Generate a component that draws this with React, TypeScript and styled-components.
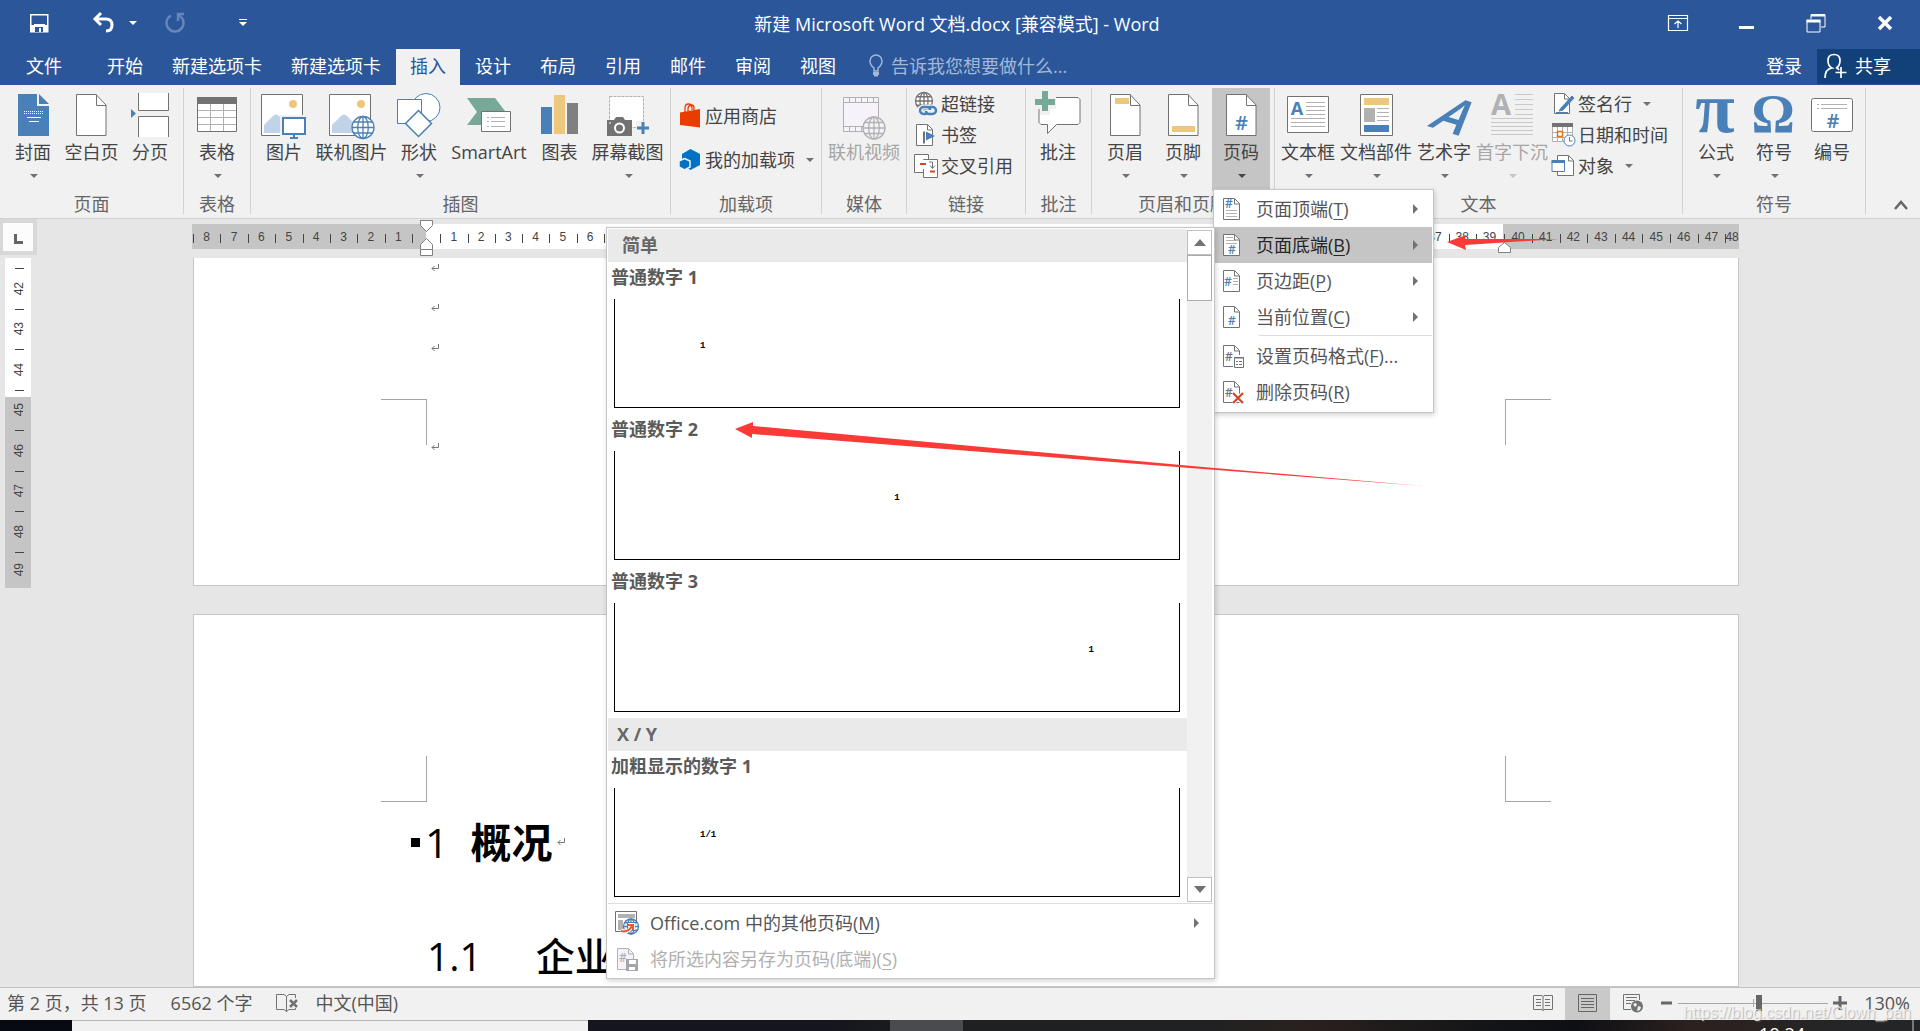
import React from "react";
import styled, { createGlobalStyle, css } from "styled-components";

const Global = createGlobalStyle`
  *, *::before, *::after { box-sizing: border-box; }
  body {
    margin: 0;
    background: #e6e6e6;
    color: #444;
    font-family: "Open Sans", "Noto Sans CJK SC", sans-serif;
    font-size: 18px;
    line-height: 24px;
  }
  button, input {
    font: inherit;
    color: inherit;
    border: 0;
    padding: 0;
    margin: 0;
    background: transparent;
  }
  button { white-space: nowrap; }
  svg { display: block; flex: none; }
`;

const BLUE = "#4a80b8";
const GREY = "#727272";
const LINE = "#b1b1b1";

/* ---------- window frame ---------- */

const Window = styled.div`
  position: relative;
  display: flex;
  flex-direction: column;
  height: 100vh;
  min-height: 600px;
  overflow: hidden;
`;

const TitleBar = styled.header`
  display: grid;
  grid-template-columns: 1fr auto 1fr;
  align-items: center;
  height: 49px;
  padding-right: 6px;
  background: #2b579a;
  color: #fff;
`;

const Title = styled.h1`
  margin: 0;
  padding-bottom: 2px;
  font-size: 18px;
  font-weight: 400;
  line-height: 24px;
`;

const QuickAccess = styled.div`
  display: flex;
  align-items: center;
  padding: 0 0 3px 28px;
`;

const QuickButton = styled.button<{ $space?: number }>`
  display: flex;
  margin-left: ${(p) => p.$space ?? 0}px;
`;

const WindowButtons = styled.div`
  display: flex;
  justify-content: flex-end;
  margin-right: -5px;
`;

const WindowButton = styled.button`
  display: grid;
  place-items: center;
  width: 69px;
  height: 49px;
  padding-bottom: 3px;
`;

const TabBar = styled.nav`
  display: flex;
  height: 36px;
  padding-left: 12px;
  background: #2b579a;
  color: #fff;
`;

const Tab = styled.button<{ $active?: boolean }>`
  height: 36px;
  padding: 0 14px 2px;
  margin-right: 1px;
  ${(p) => p.$active && css`background: #f1f1f1; color: #2b579a;`}
`;

const FileTab = styled(Tab)`
  margin-right: 17px;
`;

const TellMe = styled.label`
  display: flex;
  align-items: center;
  gap: 8px;
  margin-left: 18px;
  padding-bottom: 2px;
  color: #a3b8d8;
`;

const TellMeInput = styled.input`
  width: 220px;
  &::placeholder { color: #a3b8d8; opacity: 1; }
`;

const SignIn = styled.button`
  margin-left: auto;
  padding: 0 15px 2px;
`;

const Share = styled.button`
  display: flex;
  align-items: center;
  gap: 8px;
  width: 103px;
  height: 35px;
  padding: 0 0 1px 7px;
  background: #124078;
`;

/* ---------- ribbon ---------- */

const Ribbon = styled.section`
  display: flex;
  height: 134px;
  padding-top: 3px;
  background: #f1f1f1;
  border-bottom: 1px solid #d2d2d2;
`;

const Group = styled.div<{ $width: number }>`
  display: flex;
  flex: 0 0 ${(p) => p.$width}px;
  flex-direction: column;
  height: 126px;
  border-right: 1px solid #d2d2d2;
`;

const GroupBody = styled.div<{ $pad: number; $gap?: number }>`
  display: flex;
  flex: none;
  gap: ${(p) => p.$gap ?? 0}px;
  height: 103px;
  padding-left: ${(p) => p.$pad}px;
`;

const GroupName = styled.div`
  color: #666;
  text-align: center;
  line-height: 26px;
  white-space: nowrap;
`;

const BigButton = styled.button<{ $width: number; $active?: boolean; $dim?: boolean }>`
  display: flex;
  flex: none;
  flex-direction: column;
  align-items: center;
  width: ${(p) => p.$width}px;
  height: 103px;
  padding-top: 4px;
  color: ${(p) => (p.$dim ? "#a6a6a6" : "#444")};
  background: ${(p) => (p.$active ? "#c5c5c5" : "transparent")};
`;

const Caret = styled.i<{ $color?: string }>`
  border: 4px solid transparent;
  border-top-color: ${(p) => p.$color ?? GREY};
  border-bottom-width: 0;
`;

const BigCaret = styled(Caret)`
  margin: 10px 0 0 2px;
`;

const SmallColumn = styled.div<{ $top?: number; $row: number }>`
  display: grid;
  grid-auto-rows: ${(p) => p.$row}px;
  align-content: start;
  padding-top: ${(p) => p.$top ?? 0}px;
`;

const SmallButton = styled.button`
  display: flex;
  align-items: center;
  gap: 3px;
  ${Caret} { margin-left: 8px; }
`;

const Collapse = styled.button`
  align-self: flex-end;
  margin: 0 12px 6px auto;
`;

/* ---------- workspace ---------- */

const Workspace = styled.main`
  position: relative;
  flex: 1;
  min-height: 0;
  overflow: hidden;
  background: #e6e6e6;
`;

const RulerRow = styled.div`
  display: flex;
  align-items: flex-start;
  height: 39px;
`;

const TabStop = styled.button`
  display: grid;
  place-items: center;
  width: 37px;
  height: 36px;
  padding: 3px 0 0 1px;
  background: #fcfcfc;
  border: 4px solid #d8d8d8;
  border-left-width: 3px;
`;

const Ruler = styled.div`
  display: flex;
  flex: 1;
  height: 25px;
  margin: 5px 181px 0 155px;
  color: #444;
  font: 12px/27px "Liberation Sans", sans-serif;
`;

const RulerPart = styled.div<{ $units: number; $dark?: boolean }>`
  position: relative;
  display: flex;
  flex: ${(p) => p.$units} 0 0;
  min-width: 0;
  padding-left: 1px;
  background: ${(p) => (p.$dark ? "#c5c5c5" : "#fff")};
`;

const RulerCell = styled.span<{ $half?: boolean; $tick?: boolean }>`
  display: flex;
  flex: ${(p) => (p.$half ? 1 : 2)} 0 0;
  justify-content: center;
  min-width: 0;
  background: ${(p) => (p.$tick === false ? "none" : "linear-gradient(#444, #444) 0 60% / 1px 9px no-repeat")};
`;

const IndentMark = styled.svg<{ $side: "start" | "end"; $top: number }>`
  position: absolute;
  z-index: 1;
  top: ${(p) => p.$top}px;
  ${(p) => (p.$side === "start" ? "left: -6px;" : "right: -8px;")}
`;

const Canvas = styled.div`
  display: flex;
  align-items: flex-start;
`;

const SideRuler = styled.div`
  display: flex;
  flex: none;
  flex-direction: column;
  width: 26px;
  height: 330px;
  margin-left: 5px;
  padding-top: 10px;
  background: linear-gradient(#fff 139px, #c5c5c5 139px);
  font: 12px/14px "Liberation Sans", sans-serif;
`;

const SideCell = styled.span<{ $last?: boolean }>`
  display: grid;
  flex: ${(p) => (p.$last ? 36 : 40)} 0 0;
  place-items: center;
  padding-left: 2px;
  background: linear-gradient(#444, #444) 60% 0 / 9px 1px no-repeat;
  span { writing-mode: vertical-rl; transform: rotate(180deg); }
`;

const Pages = styled.div`
  display: flex;
  flex: 1;
  flex-direction: column;
  gap: 28px;
  margin: 0 181px 0 162px;
`;

const Page = styled.article<{ $cut?: boolean }>`
  min-height: 328px;
  background: #fff;
  border: 1px solid #c6c6c6;
  ${(p) => p.$cut && "border-top: 0;"}
`;

const Line = styled.p<{ $height: number }>`
  display: flex;
  align-items: center;
  height: ${(p) => p.$height}px;
  margin: 0;
  padding-left: 237px;
`;

const CropRow = styled.div<{ $top: number }>`
  display: flex;
  justify-content: space-between;
  padding: ${(p) => p.$top}px 187px 0;
`;

const Crop = styled.i<{ $edges: string }>`
  width: 46px;
  height: 46px;
  border: 0 solid #a6a6a6;
  border-width: ${(p) => p.$edges};
`;

const Heading1 = styled.h2`
  display: flex;
  align-items: center;
  height: 60px;
  margin: 10px 0 0;
  padding-left: 217px;
  color: #000;
  font-size: 41px;
  font-weight: 500;
  line-height: 60px;
`;

const Bullet = styled.i`
  width: 9px;
  height: 9px;
  margin-right: 5px;
  background: #000;
`;

const HeadingText = styled.span`
  margin: 0 5px 0 22px;
  font-weight: 700;
`;

const Heading2 = styled.h3`
  display: flex;
  gap: 54px;
  height: 60px;
  margin: 54px 0 0;
  padding-left: 233px;
  color: #000;
  font-size: 39px;
  font-weight: 500;
  line-height: 60px;
`;

/* ---------- menus ---------- */

const Popup = styled.div<{ $left: number; $top: number; $width: number }>`
  position: absolute;
  left: ${(p) => p.$left}px;
  top: ${(p) => p.$top}px;
  width: ${(p) => p.$width}px;
  background: #fff;
  border: 1px solid #c6c6c6;
  box-shadow: 1px 2px 5px rgba(0, 0, 0, 0.18);
  color: #555;
`;

const MenuPopup = styled(Popup)`
  padding: 1px 1px 2px 0;
`;

const MenuItem = styled.button<{ $active?: boolean; $dim?: boolean }>`
  display: flex;
  align-items: center;
  width: 100%;
  height: 36px;
  padding: 0 14px 0 7px;
  text-align: left;
  color: ${(p) => (p.$dim ? "#b1b1b1" : p.$active ? "#262626" : "#555")};
  background: ${(p) => (p.$active ? "#c5c5c5" : "transparent")};
  > svg { margin-right: 11px; }
  u { text-underline-offset: 3px; text-decoration-thickness: 1px; }
`;

const SubArrow = styled.i`
  margin-left: auto;
  border: 5px solid transparent;
  border-left-color: ${GREY};
  border-right-width: 0;
`;

const MenuRule = styled.hr`
  height: 1px;
  margin: 0 0 2px 45px;
  border: 0;
  background: #dcdcdc;
`;

const GalleryPopup = styled(Popup)`
  padding: 1px;
`;

const GalleryScroll = styled.div`
  display: flex;
  border-bottom: 1px solid #dcdcdc;
`;

const GalleryList = styled.div`
  flex: 1;
`;

const GalleryHeader = styled.h2<{ $pad: number }>`
  margin: 0;
  padding-left: ${(p) => p.$pad}px;
  background: #eaeaea;
  color: #666;
  font-size: 18px;
  font-weight: 700;
  line-height: 33px;
`;

const GalleryItem = styled.button`
  display: flex;
  flex-direction: column;
  align-items: stretch;
  width: 100%;
  height: 152px;
  padding: 3px 7px 0 3px;
  text-align: left;
  color: #5a5a5a;
  font-weight: 700;
`;

const Preview = styled.span<{ $align: string }>`
  display: flex;
  align-items: center;
  justify-content: ${(p) => p.$align};
  height: 109px;
  margin: 10px 0 0 3px;
  padding: 0 85px 15px;
  border: 1px solid #000;
  border-top: 0;
  color: #000;
  font: 700 9px/12px "Liberation Mono", monospace;
`;

const ScrollBar = styled.div`
  display: flex;
  flex-direction: column;
  width: 25px;
  margin: 1px 1px 1px 0;
  background: #f1f1f1;
`;

const ScrollButton = styled.button<{ $down?: boolean }>`
  display: grid;
  place-items: center;
  height: 25px;
  background: #fff;
  border: 1px solid #c0c0c0;
  margin-top: ${(p) => (p.$down ? "auto" : 0)};
`;

const ScrollThumb = styled.div`
  height: 46px;
  background: #fff;
  border: 1px solid #ababab;
`;

const GalleryFoot = styled.div`
  padding: 1px 0 0;
`;

const Annotation = styled.svg`
  position: absolute;
  left: 0;
  top: 0;
  pointer-events: none;
`;

/* ---------- status bar ---------- */

const StatusBar = styled.footer`
  position: relative;
  display: flex;
  align-items: center;
  height: 33px;
  padding: 0 10px 2px 7px;
  background: #f1f1f1;
  border-top: 1px solid #c0c0c0;
  color: #555;
  white-space: nowrap;
`;

const StatusItem = styled.button<{ $space?: number }>`
  margin-left: ${(p) => p.$space ?? 0}px;
`;

const ViewButtons = styled.div`
  display: flex;
  align-self: flex-start;
  margin-left: auto;
`;

const ViewButton = styled.button<{ $active?: boolean }>`
  display: grid;
  place-items: center;
  width: 45px;
  height: 32px;
  padding-bottom: 2px;
  background: ${(p) => (p.$active ? "#c9c9c9" : "transparent")};
`;

const Zoom = styled.div`
  display: flex;
  align-items: center;
  gap: 5px;
  margin: 0 17px 0 6px;
`;

const Slider = styled.input`
  appearance: none;
  width: 150px;
  height: 20px;
  background:
    linear-gradient(#a6a6a6, #a6a6a6) 75px 50% / 1px 8px no-repeat,
    linear-gradient(#a6a6a6, #a6a6a6) 0 50% / 100% 1px no-repeat;
  &::-webkit-slider-thumb {
    appearance: none;
    width: 6px;
    height: 16px;
    background: #666;
  }
`;

const Watermark = styled.span`
  position: absolute;
  right: 9px;
  top: 15px;
  color: rgba(250, 250, 250, 0.75);
  font: 16px/20px "Liberation Sans", sans-serif;
  text-shadow: 1px 1px 1px rgba(120, 120, 120, 0.5);
`;

const TaskBar = styled.div`
  display: flex;
  height: 11px;
  overflow: hidden;
  background: linear-gradient(90deg, #15161d 0 43%, #1e2022 50%, #1f2123 62%, #2a211e 68%, #121417 78%, #0d0f15 82%, #2c211e 88%, #242527 96%);
`;

const TaskStart = styled.div`
  width: 72px;
  background: #070a12;
`;

const TaskSearch = styled.div`
  width: 516px;
  background: #f1f1f1;
  border-top: 1px solid #b5b5b5;
`;

const TaskActive = styled.div`
  width: 73px;
  margin-left: 302px;
  background: #4a4b4f;
`;

const Clock = styled.time`
  margin: 4px 107px 0 auto;
  color: #fff;
  font-size: 18px;
  line-height: 20px;
`;

const DesktopEdge = styled.div`
  width: 8px;
  border-left: 2px solid #77787a;
`;

/* ---------- icons ---------- */

type IconProps = { w?: number; h?: number; children: React.ReactNode };
const Icon = ({ w = 24, h = 24, children }: IconProps) => (
  <svg width={w} height={h} viewBox={`0 0 ${w} ${h}`} fill="none" overflow="visible" aria-hidden="true">{children}</svg>
);

const Sheet = ({ children, w = 31 }: { children?: React.ReactNode; w?: number }) => (
  <Icon w={w} h={48}>
    <path d={`M.5 2.5H${w - 11}L${w - 1} 13v30.500H.5z`} fill="#fff" stroke={GREY} />
    <path d={`M${w - 10.5} 2.500v11H${w - 1}`} stroke={GREY} />
    {children}
  </Icon>
);

const Hash = ({ x, y, size, color = BLUE }: { x: number; y: number; size: number; color?: string }) => (
  <text x={x} y={y} fontSize={size} fontWeight="600" fill={color} textAnchor="middle">#</text>
);

const Globe = ({ x, y, r, color = BLUE, fill = "#fff" }: { x: number; y: number; r: number; color?: string; fill?: string }) => (
  <g transform={`translate(${x} ${y})`} stroke={color} strokeWidth="1.300">
    <circle r={r} fill={fill} />
    <ellipse rx={r * 0.48} ry={r} />
    <path d={`M${-r} 0H${r}M0 ${-r}V${r}M${-r * 0.86} ${-r * 0.5}H${r * 0.86}M${-r * 0.86} ${r * 0.5}H${r * 0.86}`} />
  </g>
);

const Photo = () => (
  <>
    <path d="M.5 2.500h41v41H.5z" fill="#fff" stroke={GREY} />
    <circle cx="32" cy="12" r="4" fill="#eec77f" />
    <path d="M3 41V33l9-9q3-3 6 0l9 9v8z" fill="#c1d3e8" />
  </>
);

const coverIcon = (
  <Icon w={31} h={48}>
    <path d="M0 2h19v12h12v30H0z" fill={BLUE} />
    <path d="M21 2l10 10H21z" fill={BLUE} />
    <path d="M6 19.500h19M6 21.500h19" stroke="#fff" strokeDasharray="1 1" />
    <path d="M9 25.500h14M11 29.500h10" stroke="#fff" />
  </Icon>
);
const breakIcon = (
  <Icon w={38} h={48}>
    <path d="M7.500 1v17.500h30V1M7.500 45V24.500h30V45" fill="#fff" stroke={GREY} />
    <path d="M0 17l5 4.500L0 26z" fill={BLUE} />
  </Icon>
);
const tableIcon = (
  <Icon w={40} h={48}>
    <path d="M.5 5.500h39v34H.5z" fill="#fff" stroke={GREY} />
    <path d="M0 5h40v7H0z" fill={GREY} />
    <path d="M1 18.500h38M1 25.500h38M1 32.500h38M13.500 12v27M26.500 12v27" stroke={LINE} />
  </Icon>
);
const pictureIcon = (
  <Icon w={46} h={48}>
    <Photo />
    <path d="M19 23h27v21H19z" fill="#f1f1f1" />
    <path d="M22 26h22v16H22zM33 42v4M29 46h8" fill="#fff" stroke={BLUE} strokeWidth="2" />
  </Icon>
);
const onlinePictureIcon = (
  <Icon w={46} h={48}>
    <Photo />
    <Globe x={34} y={35.5} r={11} />
  </Icon>
);
const shapesIcon = (
  <Icon w={44} h={48}>
    <circle cx="29" cy="15.500" r="14" fill="#fff" stroke={BLUE} />
    <path d="M.5 7.500h24v24H.5z" fill="#fff" stroke={BLUE} />
    <path d="M21.500 18.500l13 13-13 13-13-13z" fill="#fff" stroke={BLUE} strokeWidth="1.500" />
  </Icon>
);
const smartArtIcon = (
  <Icon w={45} h={48}>
    <path d="M0 6h28l10 13H15v14H0l10-13z" fill="#78a897" />
    <path d="M14.500 19.500h29v20h-29z" fill="#fff" stroke={GREY} />
    <path d="M20 25.500h2M20 29.500h2M20 34.500h2M24 25.500h14M24 29.500h14M24 34.500h14" stroke={LINE} />
  </Icon>
);
const chartIcon = (
  <Icon w={38} h={48}>
    <path d="M0 15h11v27H0z" fill={BLUE} />
    <path d="M13 3h11v39H13z" fill="#eec77f" />
    <path d="M26 11h11v31H26z" fill="#808080" />
  </Icon>
);
const screenshotIcon = (
  <Icon w={42} h={48}>
    <path d="M2.500 4.500h34v31h-34z" fill="#fff" stroke={LINE} strokeDasharray="3 1" />
    <path d="M0 28h7l2-3h7l2 3h7v16H0z" fill={GREY} />
    <circle cx="12.500" cy="36" r="4.500" stroke="#fff" strokeWidth="2" />
    <path d="M2 31h2" stroke="#fff" />
    <path d="M29 29h14v14H29z" fill="#f1f1f1" />
    <path d="M30 36h12M36 30v12" stroke={BLUE} strokeWidth="3" />
  </Icon>
);
const videoIcon = (
  <Icon w={42} h={48}>
    <path d="M.5 5.500h35v34H.5z" fill="#f6f2f9" stroke={LINE} />
    <path d="M.5 10.500h35M.5 34.500h35M6.500 5v5M12.500 5v5M18.500 5v5M24.500 5v5M30.500 5v5M6.500 35v5M12.500 35v5M18.500 35v5" stroke={LINE} />
    <Globe x={31} y={36} r={11} color={LINE} fill="#f6f2f9" />
  </Icon>
);
const commentIcon = (
  <Icon w={46} h={48}>
    <path d="M7 5.500h36l2 2v23l-2 2H21.500l-9 9v-9H6l-2-2V8z" fill="#fff" stroke={GREY} />
    <path d="M-1 5h7V-1h9V5h6v12h-6v6H5v-6h-6z" fill="#f1f1f1" />
    <path d="M0 7h7V-1h6V7h7v6h-7v6H7v-6H0z" fill="#78a897" />
  </Icon>
);
const headerIcon = <Sheet><path d="M5 6h14v6H5z" fill="#eec77f" /></Sheet>;
const footerIcon = <Sheet><path d="M4 34h23v6H4z" fill="#eec77f" /></Sheet>;
const numberIcon = <Sheet><Hash x={15.5} y={38} size={20} /></Sheet>;
const textBoxIcon = (
  <Icon w={42} h={48}>
    <path d="M.5 4.500h41v36H.5z" fill="#fff" stroke={GREY} />
    <text x="10" y="23" fontSize="18" fontWeight="700" fill={BLUE} textAnchor="middle">A</text>
    <path d="M19 10.500h19M19 14.500h19M19 18.500h19M19 22.500h19M4 26.500h34M4 30.500h34M4 34.500h34" stroke={LINE} />
  </Icon>
);
const partsIcon = (
  <Icon w={33} h={48}>
    <path d="M.5 2.500h32v41H.5z" fill="#fff" stroke={GREY} />
    <path d="M4 6h25v7H4z" fill="#eec77f" />
    <path d="M4 16h11v14H4z" fill={LINE} />
    <path d="M17 16.500h12M17 20.500h12M17 24.500h12M17 28.500h12" stroke={LINE} />
    <path d="M4 33h25v7H4z" fill={BLUE} />
  </Icon>
);
const wordArtIcon = (
  <Icon w={34} h={48}>
    <text x="0" y="0" transform="translate(0 34) rotate(17) skewX(-24)" fontSize="50" fontWeight="600" fill={BLUE} textAnchor="start">A</text>
  </Icon>
);
const dropCapIcon = (
  <Icon w={42} h={48}>
    <text x="10" y="23" fontSize="29" fontWeight="700" fill={LINE} textAnchor="middle">A</text>
    <path d="M24 2.500h18M24 7.500h18M24 12.500h18M24 17.500h18M24 22.500h18M0 26.500h42M0 30.500h42M0 34.500h42M0 38.500h42M0 42.500h42" stroke="#c9c9c9" />
  </Icon>
);
const equationIcon = (
  <Icon w={40} h={48}>
    <text x="19" y="40" fontFamily="Liberation Serif" fontSize="72" fontWeight="700" fill={BLUE} textAnchor="middle">π</text>
  </Icon>
);
const symbolIcon = (
  <Icon w={40} h={48}>
    <text x="19" y="40" fontFamily="Liberation Serif" fontSize="54" fontWeight="700" fill={BLUE} textAnchor="middle">Ω</text>
  </Icon>
);
const listNumberIcon = (
  <Icon w={42} h={48}>
    <rect x=".5" y="6.500" width="41" height="33" rx="2" fill="#fff" stroke={GREY} />
    <path d="M6 12.500h2M6 16.500h2M10 12.500h26M10 16.500h26" stroke={LINE} />
    <Hash x={22} y={36} size={20} />
  </Icon>
);

const storeIcon = (
  <Icon w={22} h={26}>
    <path d="M5 9V5q0-4 3.500-4T12 5v2M8 8V5q1-3 3.500-3T14 5v2" stroke="#eb3c00" strokeWidth="1.300" />
    <path d="M0 9.500L20 6v18.500L0 22z" fill="#eb3c00" />
  </Icon>
);
const addinIcon = (
  <Icon w={22} h={26}>
    <path d="M10.500 2l9.500 5v11l-9.500 5L2 18V7z" fill="#0072c6" />
    <path d="M4.500 11.500L10 14v6l-5.500 3L-1 20v-6z" fill="#0072c6" stroke="#f1f1f1" strokeWidth="1.500" />
  </Icon>
);
const linkIcon = (
  <Icon>
    <Globe x={10} y={9} r={8.5} color={GREY} />
    <path d="M13 23H9.500a4 4 0 010-8H14q3 0 3 3M14 15h4a4 4 0 010 8h-4q-3 0-3-3" stroke="#f1f1f1" strokeWidth="5" />
    <path d="M12 22H9.500a3 3 0 010-7H13q3 0 3 3M15 15h3.500a3 3 0 010 7H15q-3 0-3-3" stroke={BLUE} strokeWidth="2.500" />
  </Icon>
);
const bookmarkIcon = (
  <Icon>
    <path d="M2.500 1.500h11l5 5v16h-16z" fill="#fff" stroke={GREY} />
    <path d="M13.500 2v5h5" stroke={GREY} />
    <path d="M10 8.500v12" stroke={GREY} strokeWidth="2" />
    <path d="M12 8.500l9 4.500-9 4.500z" fill={BLUE} />
  </Icon>
);
const crossRefIcon = (
  <Icon>
    <path d="M.5.5h14v18H.5z" fill="#fff" stroke={GREY} />
    <path d="M9.500 5.500h14v18h-14z" fill="#fff" stroke={GREY} />
    <path d="M7 6h4v9H7z" fill="#fff" />
    <path d="M6 10h6M16 17.500h5" stroke="#d24726" strokeWidth="2" />
    <path d="M15 8h3.500v6M16 11.500l2.500 3 2.500-3" stroke={GREY} />
  </Icon>
);
const signatureIcon = (
  <Icon>
    <path d="M3.500 1.500h10l5 5v15h-15z" fill="#fff" stroke={GREY} />
    <path d="M13.500 2v5h5" stroke={GREY} />
    <path d="M10 16L21 4l2 2-11 12-4 1z" fill={BLUE} stroke={BLUE} />
    <path d="M5 20.500h12" stroke={BLUE} />
  </Icon>
);
const dateIcon = (
  <Icon>
    <path d="M1.500 1.500h20v17h-20z" fill="#fff" stroke={LINE} />
    <path d="M1 0h21v4H1z" fill={GREY} />
    <path d="M2 9.500h19M2 14.500h19M6.500 4v14M11.500 4v14M16.500 4v14" stroke={LINE} />
    <path d="M6.500 8.500h5v5h-5z" fill="#fff" stroke="#e8730a" strokeWidth="1.500" />
    <circle cx="18.500" cy="17.500" r="5.500" fill="#fff" stroke={BLUE} />
    <path d="M18.500 14v4h3" stroke={GREY} />
  </Icon>
);
const objectIcon = (
  <Icon>
    <path d="M6.500 1.500h11l5 5v15h-16z" fill="#fff" stroke={GREY} />
    <path d="M17.500 2v5h5" stroke={GREY} />
    <path d="M1 7.500h12.500v10H1z" fill="#fff" stroke={BLUE} />
    <path d="M.5 6h13.500v3H.5z" fill={BLUE} />
  </Icon>
);

type MenuIconProps = { hashX: number; hashY: number; lines?: string; color?: string; children?: React.ReactNode };
const MenuIcon = ({ hashX, hashY, lines, color, children }: MenuIconProps) => (
  <Icon>
    <path d="M2.500 1.500h11l5 5v16h-16z" fill="#fff" stroke={GREY} />
    <path d="M13.500 2v5h5" stroke={GREY} />
    {lines && <path d={lines} stroke={LINE} />}
    <Hash x={hashX} y={hashY} size={12} color={color} />
    {children}
  </Icon>
);

const ParaMark = () => (
  <svg width="8" height="8" viewBox="0 0 8 8" fill="none" aria-hidden="true">
    <path d="M7.500 0v4.500H1M3.500 2L1 4.500 3.500 7" stroke="#777" />
  </svg>
);

/* ---------- ribbon parts ---------- */

type BigProps = {
  label: string;
  icon: React.ReactNode;
  width: number;
  caret?: boolean;
  active?: boolean;
  dim?: boolean;
};
const Big = ({ label, icon, width, caret, active, dim }: BigProps) => (
  <BigButton $width={width} $active={active} $dim={dim} aria-expanded={active}>
    {icon}
    <span>{label}</span>
    {caret && <BigCaret $color={dim ? "#c6c6c6" : active ? "#444" : GREY} />}
  </BigButton>
);

const Small = ({ label, icon, caret }: { label: string; icon: React.ReactNode; caret?: boolean }) => (
  <SmallButton>
    {icon}
    <span>{label}</span>
    {caret && <Caret />}
  </SmallButton>
);

const range = (from: number, to: number) =>
  Array.from({ length: Math.abs(to - from) + 1 }, (_, i) => from + (to > from ? i : -i));

const previews = [
  { name: "普通数字 1", sample: "1", align: "flex-start" },
  { name: "普通数字 2", sample: "1", align: "center" },
  { name: "普通数字 3", sample: "1", align: "flex-end" },
];

const GalleryEntry = ({ name, sample, align }: (typeof previews)[number]) => (
  <GalleryItem>
    {name}
    <Preview $align={align}>{sample}</Preview>
  </GalleryItem>
);

export default function App() {
  return (
    <Window>
      <Global />
      <TitleBar>
        <QuickAccess>
          <QuickButton aria-label="保存">
            <Icon w={22} h={22}>
              <path d="M2.750 2.750h17v17h-17z" stroke="#fff" strokeWidth="1.500" />
              <path d="M3 13h3v-1h11v1h3v7H3z" fill="#fff" />
              <path d="M7 15h8v5H13v-4h-2v4H7z" fill="#2b579a" />
            </Icon>
          </QuickButton>
          <QuickButton $space={43} aria-label="撤消">
            <Icon w={22} h={22}>
              <path d="M8 1L2 7l6 6M2.500 7H13q6 0 6 6t-6 6" stroke="#fff" strokeWidth="3" />
            </Icon>
          </QuickButton>
          <QuickButton $space={14} aria-label="撤消列表"><Caret $color="#fff" /></QuickButton>
          <QuickButton $space={27} aria-label="恢复">
            <Icon w={22} h={22}>
              <path d="M7 3.500a8.500 8.500 0 108 0M14 9V2h6" stroke="#6486b8" strokeWidth="2.500" />
            </Icon>
          </QuickButton>
          <QuickButton $space={53} aria-label="自定义快速访问工具栏">
            <Icon w={8} h={8}><path d="M0 .5h8" stroke="#fff" /><path d="M0 3h8L4 7z" fill="#fff" /></Icon>
          </QuickButton>
        </QuickAccess>
        <Title>新建 Microsoft Word 文档.docx [兼容模式] - Word</Title>
        <WindowButtons>
          <WindowButton aria-label="功能区显示选项">
            <Icon w={20} h={16}><path d="M.5.5h19v15H.5zM1 3.500h18M10 13V6.500M6.500 9L10 6l3.500 3" stroke="#fff" strokeWidth="1.200" /></Icon>
          </WindowButton>
          <WindowButton aria-label="最小化">
            <Icon w={16} h={20}><path d="M0 14.500h15" stroke="#fff" strokeWidth="3" /></Icon>
          </WindowButton>
          <WindowButton aria-label="还原">
            <Icon w={20} h={20}><path d="M5 6V1.500h14V14h-4M1 7.500h13v11.500H1z" stroke="#fff" /><path d="M5 1h14v2.500H5zM.5 6.500h14v3H.5z" fill="#fff" /></Icon>
          </WindowButton>
          <WindowButton aria-label="关闭">
            <Icon w={16} h={16}><path d="M2 2l12 12M14 2L2 14" stroke="#fff" strokeWidth="3.500" /></Icon>
          </WindowButton>
        </WindowButtons>
      </TitleBar>

      <TabBar>
        <FileTab>文件</FileTab>
        <Tab>开始</Tab>
        <Tab>新建选项卡</Tab>
        <Tab>新建选项卡</Tab>
        <Tab $active>插入</Tab>
        <Tab>设计</Tab>
        <Tab>布局</Tab>
        <Tab>引用</Tab>
        <Tab>邮件</Tab>
        <Tab>审阅</Tab>
        <Tab>视图</Tab>
        <TellMe>
          <Icon w={14} h={24}>
            <path d="M5 17v-3q-4-3-4-7a6 6 0 0112 0q0 4-4 7v3z" stroke="#a3b8d8" strokeWidth="1.500" />
            <path d="M4 18h6v3H4zM5 21h4v1.500H5z" fill="#a3b8d8" />
          </Icon>
          <TellMeInput placeholder="告诉我您想要做什么..." aria-label="告诉我您想要做什么" />
        </TellMe>
        <SignIn>登录</SignIn>
        <Share>
          <Icon w={23} h={26}>
            <path d="M1 25q0-9 7-10-4-2-4-7.500Q4 1.500 10 1.500t6 6Q16 13 12 15q2 0 3 2M17 14v11M11.500 19.500h11" stroke="#fff" strokeWidth="1.700" />
          </Icon>
          共享
        </Share>
      </TabBar>

      <Ribbon>
        <Group $width={184}>
          <GroupBody $pad={8}>
            <Big label="封面" icon={coverIcon} width={50} caret />
            <Big label="空白页" icon={<Sheet />} width={67} />
            <Big label="分页" icon={breakIcon} width={50} />
          </GroupBody>
          <GroupName>页面</GroupName>
        </Group>
        <Group $width={67}>
          <GroupBody $pad={8}>
            <Big label="表格" icon={tableIcon} width={50} caret />
          </GroupBody>
          <GroupName>表格</GroupName>
        </Group>
        <Group $width={420}>
          <GroupBody $pad={8}>
            <Big label="图片" icon={pictureIcon} width={50} />
            <Big label="联机图片" icon={onlinePictureIcon} width={85} />
            <Big label="形状" icon={shapesIcon} width={50} caret />
            <Big label="SmartArt" icon={smartArtIcon} width={90} />
            <Big label="图表" icon={chartIcon} width={51} />
            <Big label="屏幕截图" icon={screenshotIcon} width={85} caret />
          </GroupBody>
          <GroupName>插图</GroupName>
        </Group>
        <Group $width={151}>
          <GroupBody $pad={9}>
            <SmallColumn $row={44} $top={6}>
              <Small label="应用商店" icon={storeIcon} />
              <Small label="我的加载项" icon={addinIcon} caret />
            </SmallColumn>
          </GroupBody>
          <GroupName>加载项</GroupName>
        </Group>
        <Group $width={85}>
          <GroupBody $pad={0}>
            <Big label="联机视频" icon={videoIcon} width={84} dim />
          </GroupBody>
          <GroupName>媒体</GroupName>
        </Group>
        <Group $width={119}>
          <GroupBody $pad={7}>
            <SmallColumn $row={31}>
              <Small label="超链接" icon={linkIcon} />
              <Small label="书签" icon={bookmarkIcon} />
              <Small label="交叉引用" icon={crossRefIcon} />
            </SmallColumn>
          </GroupBody>
          <GroupName>链接</GroupName>
        </Group>
        <Group $width={66}>
          <GroupBody $pad={7}>
            <Big label="批注" icon={commentIcon} width={50} />
          </GroupBody>
          <GroupName>批注</GroupName>
        </Group>
        <Group $width={183}>
          <GroupBody $pad={4}>
            <Big label="页眉" icon={headerIcon} width={58} caret />
            <Big label="页脚" icon={footerIcon} width={58} caret />
            <Big label="页码" icon={numberIcon} width={58} caret active />
          </GroupBody>
          <GroupName>页眉和页脚</GroupName>
        </Group>
        <Group $width={408}>
          <GroupBody $pad={4} $gap={1}>
            <Big label="文本框" icon={textBoxIcon} width={58} caret />
            <Big label="文档部件" icon={partsIcon} width={76} caret />
            <Big label="艺术字" icon={wordArtIcon} width={58} caret />
            <Big label="首字下沉" icon={dropCapIcon} width={76} caret dim />
            <SmallColumn $row={31}>
              <Small label="签名行" icon={signatureIcon} caret />
              <Small label="日期和时间" icon={dateIcon} />
              <Small label="对象" icon={objectIcon} caret />
            </SmallColumn>
          </GroupBody>
          <GroupName>文本</GroupName>
        </Group>
        <Group $width={183}>
          <GroupBody $pad={4}>
            <Big label="公式" icon={equationIcon} width={58} caret />
            <Big label="符号" icon={symbolIcon} width={58} caret />
            <Big label="编号" icon={listNumberIcon} width={58} />
          </GroupBody>
          <GroupName>符号</GroupName>
        </Group>
        <Collapse aria-label="折叠功能区">
          <Icon w={14} h={14}><path d="M1 11l6-7 6 7" stroke="#666" strokeWidth="2.500" /></Icon>
        </Collapse>
      </Ribbon>

      <Workspace>
        <RulerRow>
          <TabStop aria-label="左对齐式制表符">
            <Icon w={9} h={10}><path d="M1.500 0v8.500H9" stroke="#666" strokeWidth="3" /></Icon>
          </TabStop>
          <Ruler>
            <RulerPart $units={233} $dark>
              {range(8, 1).map((n) => <RulerCell key={n}>{n}</RulerCell>)}
              <RulerCell $half />
            </RulerPart>
            <RulerPart $units={1078}>
              <IndentMark $side="start" $top={-4} width="13" height="37" viewBox="0 0 13 37">
                <path d="M.5.5h12v5l-6 6-6-6zM.5 24.500l6-6 6 6v5H.5zM.5 29.500h12v6H.5z" fill="#fff" stroke="#808080" />
              </IndentMark>
              <RulerCell $half $tick={false} />
              {range(1, 39).map((n) => <RulerCell key={n}>{n}</RulerCell>)}
              <IndentMark $side="end" $top={18} width="13" height="11" viewBox="0 0 13 11">
                <path d="M.5 5.500l6-5 6 5v5H.5z" fill="#fff" stroke="#808080" />
              </IndentMark>
            </RulerPart>
            <RulerPart $units={235} $dark>
              {range(40, 47).map((n) => <RulerCell key={n}>{n}</RulerCell>)}
              <RulerCell $half>48</RulerCell>
            </RulerPart>
          </Ruler>
        </RulerRow>
        <Canvas>
          <SideRuler>
            {range(42, 49).map((n) => <SideCell key={n} $last={n === 49}><span>{n}</span></SideCell>)}
          </SideRuler>
          <Pages>
            <Page $cut>
              <Line $height={20}><ParaMark /></Line>
              <Line $height={60}><ParaMark /></Line>
              <Line $height={20}><ParaMark /></Line>
              <CropRow $top={41}>
                <Crop $edges="1px 1px 0 0" />
                <Crop $edges="1px 0 0 1px" />
              </CropRow>
              <Line $height={4}><ParaMark /></Line>
            </Page>
            <Page>
              <CropRow $top={141}>
                <Crop $edges="0 1px 1px 0" />
                <Crop $edges="0 0 1px 1px" />
              </CropRow>
              <Heading1><Bullet />1<HeadingText>概况</HeadingText><ParaMark /></Heading1>
              <Heading2><span>1.1</span><span>企业</span></Heading2>
            </Page>
          </Pages>
        </Canvas>
      </Workspace>

      <StatusBar>
        <StatusItem>第 2 页，共 13 页</StatusItem>
        <StatusItem $space={24}>6562 个字</StatusItem>
        <StatusItem $space={24} aria-label="校对">
          <Icon w={22} h={20}>
            <path d="M10.500 3.500L8 1.500H.5v15H8l2.500 2 2.500-2h6.500V15M10.500 3.500v15M10.500 3.500l2.500-2h6.500V5" stroke={GREY} />
            <path d="M14 7l7 7M21 7l-7 7" stroke={GREY} strokeWidth="2.500" />
          </Icon>
        </StatusItem>
        <StatusItem $space={17}>中文(中国)</StatusItem>
        <ViewButtons>
          <ViewButton aria-label="阅读视图">
            <Icon w={20} h={18}>
              <path d="M.5 1.500H9l1 1 1-1h8.500v14H11l-1 1-1-1H.5zM10 2v15M3 5.500h5M3 8.500h5M3 11.500h5M12 5.500h5M12 8.500h5M12 11.500h5" stroke={GREY} />
            </Icon>
          </ViewButton>
          <ViewButton $active aria-label="页面视图">
            <Icon w={20} h={18}>
              <path d="M.5.5h18v17H.5zM3 4.500h13M3 7.500h13M3 10.500h13M3 13.500h13" stroke="#666" />
            </Icon>
          </ViewButton>
          <ViewButton aria-label="Web 版式视图">
            <Icon w={20} h={20}>
              <path d="M8 16.500H.5v-15h16V7M3 4.500h11M3 7.500h9M3 10.500h5" stroke={GREY} />
              <circle cx="14" cy="13.500" r="6" fill={GREY} />
              <path d="M10 11l3-1 1 2-2 2zM15 13l3 1-1 3-3 1z" fill="#f1f1f1" />
            </Icon>
          </ViewButton>
        </ViewButtons>
        <Zoom>
          <button aria-label="缩小"><Icon w={12} h={14}><path d="M0 7h11" stroke="#666" strokeWidth="3" /></Icon></button>
          <Slider type="range" min="0" max="100" defaultValue="54" aria-label="显示比例" />
          <button aria-label="放大"><Icon w={14} h={14}><path d="M0 7h14M7 0v14" stroke="#666" strokeWidth="3" /></Icon></button>
        </Zoom>
        <StatusItem>130%</StatusItem>
        <Watermark>https://blog.csdn.net/Clown_pan</Watermark>
      </StatusBar>
      <TaskBar>
        <TaskStart />
        <TaskSearch />
        <TaskActive />
        <Clock>19:24</Clock>
        <DesktopEdge />
      </TaskBar>

      <MenuPopup $left={1213} $top={189} $width={221} role="menu">
        <MenuItem role="menuitem">
          <MenuIcon hashX={8} hashY={11} lines="M5 13.500h11M5 16.500h11M5 19.500h11" />
          <span>页面顶端(<u>T</u>)</span><SubArrow />
        </MenuItem>
        <MenuItem role="menuitem" $active>
          <MenuIcon hashX={11} hashY={21} lines="M5 4.500h7M5 7.500h11M5 10.500h11" />
          <span>页面底端(<u>B</u>)</span><SubArrow />
        </MenuItem>
        <MenuItem role="menuitem">
          <MenuIcon hashX={7} hashY={17} lines="M12 9.500h5M12 12.500h5M12 15.500h5" />
          <span>页边距(<u>P</u>)</span><SubArrow />
        </MenuItem>
        <MenuItem role="menuitem">
          <MenuIcon hashX={11} hashY={20} />
          <span>当前位置(<u>C</u>)</span><SubArrow />
        </MenuItem>
        <MenuRule />
        <MenuItem role="menuitem">
          <MenuIcon hashX={8} hashY={17} color={GREY}>
            <path d="M12 11h12v13H12z" fill="#fff" />
            <path d="M13.500 13.500h9v10h-9z" fill="#fff" stroke={GREY} />
            <path d="M13 14h10M15 17.500h2M18 17.500h3M15 20.500h2M18 20.500h3" stroke={GREY} />
          </MenuIcon>
          <span>设置页码格式(<u>F</u>)...</span>
        </MenuItem>
        <MenuItem role="menuitem">
          <MenuIcon hashX={8} hashY={17} color={GREY}>
            <path d="M12 13l10 10M22 13L12 23" stroke="#fff" strokeWidth="4" />
            <path d="M12 13l10 10M22 13L12 23" stroke="#d24726" strokeWidth="2.200" />
          </MenuIcon>
          <span>删除页码(<u>R</u>)</span>
        </MenuItem>
      </MenuPopup>

      <GalleryPopup $left={606} $top={227} $width={609}>
        <GalleryScroll>
          <GalleryList>
            <GalleryHeader $pad={14}>简单</GalleryHeader>
            {previews.map((p) => <GalleryEntry key={p.name} {...p} />)}
            <GalleryHeader $pad={9}>X / Y</GalleryHeader>
            <GalleryEntry name="加粗显示的数字 1" sample="1/1" align="flex-start" />
          </GalleryList>
          <ScrollBar>
            <ScrollButton aria-label="向上滚动">
              <Icon w={12} h={7}><path d="M0 7l6-7 6 7z" fill={GREY} /></Icon>
            </ScrollButton>
            <ScrollThumb />
            <ScrollButton $down aria-label="向下滚动">
              <Icon w={12} h={7}><path d="M0 0h12L6 7z" fill={GREY} /></Icon>
            </ScrollButton>
          </ScrollBar>
        </GalleryScroll>
        <GalleryFoot>
          <MenuItem role="menuitem">
            <Icon>
              <path d="M.5.5h21v20H.5z" fill="#fff" stroke={GREY} />
              <path d="M3 3h17v4H3zM3 9h5v10H3zM10 9h10v6H10z" fill={LINE} />
              <Globe x={16} y={15.5} r={7.5} />
              <path d="M6 20q7 2 11-4M13 14h5v5" stroke="#fff" strokeWidth="4" />
              <path d="M6 20q7 2 11-5M13 14h5v5" stroke="#f0562a" strokeWidth="2" />
            </Icon>
            <span>Office.com 中的其他页码(<u>M</u>)</span><SubArrow />
          </MenuItem>
          <MenuItem role="menuitem" $dim disabled>
            <Icon>
              <path d="M2.500 1.500h11l5 5v16h-16z" fill="#f6f2f9" stroke={LINE} />
              <path d="M13.500 2v5h5" stroke={LINE} />
              <Hash x={8} y={15} size={12} color={LINE} />
              <path d="M11 12h12v12H11z" fill="#a6a6a6" />
              <path d="M14 13h7v4h-7zM14 20h6v3h-6z" fill="#fff" />
            </Icon>
            <span>将所选内容另存为页码(底端)(<u>S</u>)</span>
          </MenuItem>
        </GalleryFoot>
      </GalleryPopup>

      <Annotation width="1600" height="500" viewBox="0 0 1600 500" aria-hidden="true">
        <path d="M1447 242l19-7-1 4 94 0-94 6 1 5z" fill="#fa3a36" />
        <path d="M735 429l18-7v4l450 41 220 19-220-17-451-35v4z" fill="#fa3a36" />
      </Annotation>
    </Window>
  );
}
